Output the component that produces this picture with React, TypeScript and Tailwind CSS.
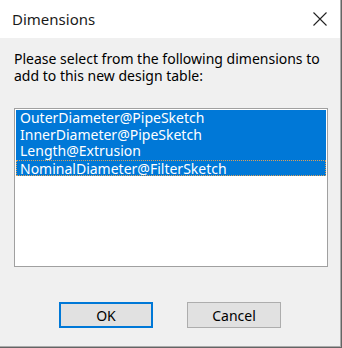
const dims = [
  "OuterDiameter@PipeSketch",
  "InnerDiameter@PipeSketch",
  "Length@Extrusion",
  "NominalDiameter@FilterSketch",
];

export default function App() {
  return (
    <div className="w-[342px] h-[348px] border-r border-b border-[#646464]">
      <div
        className="flex flex-col h-full bg-[#f0f0f0] border-r border-b border-[#ababab] text-[#000]"
        style={{ fontFamily: '"Noto Sans", "Open Sans", sans-serif' }}
      >
        <div className="h-[38px] bg-white flex items-center justify-between pl-3 pr-[13px]">
          <span className="text-[15px] text-[#1a1a1a]">Dimensions</span>
          <svg width="14" height="14" viewBox="0 0 14 14" className="text-[#222]">
            <path d="M0.5 0.5 L13.5 13.5 M13.5 0.5 L0.5 13.5" stroke="currentColor" strokeWidth="1.1" fill="none" />
          </svg>
        </div>

        <p className="mt-[12px] px-[14px] text-[14px] leading-[17px] whitespace-nowrap">
          Please select from the following dimensions to
          <br />
          add to this new design table:
        </p>

        <div className="mt-[24px] ml-[14px] w-[314px] h-[159px] bg-white border border-[#a0a0a0] p-px">
          {dims.map((d, i) => (
            <div
              key={d}
              className={
                i === dims.length - 1
                  ? "h-[16.5px] leading-[15px] bg-[#0078d7] text-white text-[14px] px-[3px] border border-dotted border-[#d9a05a]"
                  : "h-[16.5px] leading-[16.5px] bg-[#0078d7] text-white text-[14px] px-[4px]"
              }
            >
              {d}
            </div>
          ))}
        </div>

        <div className="flex justify-center gap-[34px] mt-[35px]">
          <button className="w-[94px] h-[26px] bg-[#e1e1e1] border-2 border-[#0078d7] text-[14px]">
            OK
          </button>
          <button className="w-[94px] h-[26px] bg-[#e1e1e1] border border-[#adadad] text-[14px]">
            Cancel
          </button>
        </div>
      </div>
    </div>
  );
}
